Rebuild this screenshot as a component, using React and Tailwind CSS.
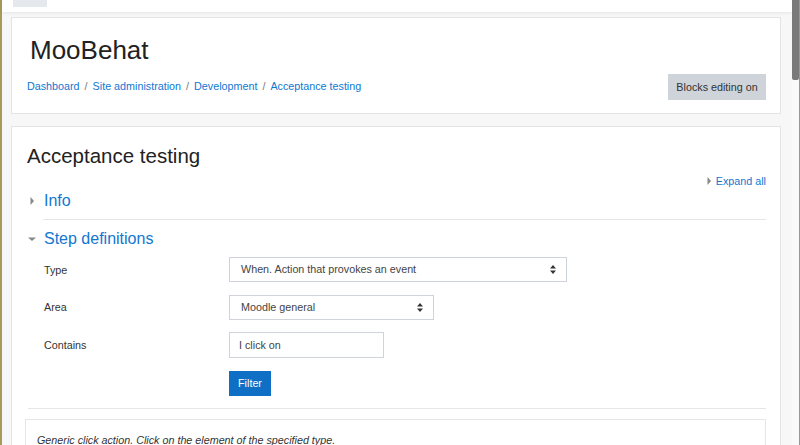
import React from 'react';

const font = { fontFamily: '"Liberation Sans", Arial, sans-serif' };

function Caret({ open }) {
  return open ? (
    <svg width="8" height="8" viewBox="0 0 8 8" className="shrink-0"><path d="M0 2.5h8L4 6z" fill="#888" /></svg>
  ) : (
    <svg width="8" height="8" viewBox="0 0 8 8" className="shrink-0"><path d="M2.5 0v8l3.5-4z" fill="#888" /></svg>
  );
}

function SelectArrows() {
  return (
    <svg width="6" height="9" viewBox="0 0 6 9"><path d="M0 3.5L3 0l3 3.5zM0 5.5L3 9l3-3.5z" fill="#333" /></svg>
  );
}

function Row({ label, children }) {
  return (
    <div className="flex items-center">
      <div className="w-[185px] text-[10.75px] leading-[14px] text-[#333]">{label}</div>
      {children}
    </div>
  );
}

export default function App() {
  return (
    <div style={font} className="w-[800px] h-[445px] overflow-hidden flex bg-white">
      <div className="w-[2px] shrink-0 bg-[#a89a5a]" />
      <div className="flex-1 flex flex-col bg-[#f7f7f7]">
        <div className="h-[12px] shrink-0 bg-white shadow-[0_1px_3px_rgba(0,0,0,0.08)] flex">
          <div className="ml-[11px] w-[34px] h-[7px] bg-[#e5e8ec]" />
        </div>
        <div className="pl-[9px] pr-[11px] pt-[5px] flex flex-col gap-[12px] shrink-0">
          <div className="bg-white border border-[#e3e3e3] h-[97px] pl-[15px] pr-[14px] pt-[17px]">
            <div className="text-[26px] leading-[30px] text-[#222] ml-[3px]">MooBehat</div>
            <div className="flex items-start justify-between mt-[9px]">
              <div className="text-[10.75px] leading-[14px] text-[#1177d1] mt-[5px] flex gap-[5px]">
                <span>Dashboard</span><span className="text-[#777]">/</span>
                <span>Site administration</span><span className="text-[#777]">/</span>
                <span>Development</span><span className="text-[#777]">/</span>
                <span>Acceptance testing</span>
              </div>
              <div className="bg-[#ced4da] text-[10.75px] text-[#333] h-[26px] w-[98px] flex items-center justify-center">Blocks editing on</div>
            </div>
          </div>
          <div className="bg-white border border-[#e3e3e3] h-[340px] pl-[15px] pr-[14px] pt-[16px]">
            <div className="text-[20.5px] leading-[26px] text-[#222]">Acceptance testing</div>
            <div className="flex justify-end items-center gap-[3px] text-[10.75px] leading-[14px] text-[#1177d1] mt-[5px]">
              <Caret />Expand all
            </div>
            <div className="flex items-center gap-[8px] mt-[3px] ml-[1px] h-[20px]">
              <Caret />
              <span className="text-[16px] leading-[20px] text-[#1177d1]">Info</span>
            </div>
            <div className="ml-[16px] border-t border-[#e6e6e6] mt-[8px]" />
            <div className="flex items-center gap-[8px] mt-[9px] ml-[1px] h-[20px]">
              <Caret open />
              <span className="text-[16px] leading-[20px] text-[#1177d1]">Step definitions</span>
            </div>
            <div className="ml-[17px] mt-[8px] flex flex-col gap-[12.5px]">
              <Row label="Type">
                <div className="w-[338px] h-[25px] border border-[#ced4da] flex items-center justify-between pl-[11px] pr-[10px] text-[10.75px] text-[#444]">
                  <span>When. Action that provokes an event</span><SelectArrows />
                </div>
              </Row>
              <Row label="Area">
                <div className="w-[205px] h-[25px] border border-[#ced4da] flex items-center justify-between pl-[11px] pr-[10px] text-[10.75px] text-[#444]">
                  <span>Moodle general</span><SelectArrows />
                </div>
              </Row>
              <Row label="Contains">
                <div className="w-[155px] h-[26px] border border-[#ced4da] flex items-center px-[9px] text-[10.75px] text-[#444]">I click on</div>
              </Row>
              <Row label="">
                <div className="h-[25px] w-[42px] bg-[#0f6fc5] text-white text-[10.75px] flex items-center justify-center">Filter</div>
              </Row>
            </div>
            <div className="ml-[1px] border-t border-[#e6e6e6] mt-[12px]" />
            <div className="mt-[10px] -ml-[2px] border border-[#e6e6e6] h-[40px] px-[11px] pt-[13px] text-[10.75px] leading-[14px] italic text-[#333]">
              Generic click action. Click on the element of the specified type.
            </div>
          </div>
        </div>
      </div>
      <div className="w-[7px] shrink-0 bg-[#fafafa] flex flex-col">
        <div className="h-[80px] bg-[#7a7a7a] rounded-b-[2px]" />
      </div>
      <div className="w-[1px] shrink-0 bg-[#a89a5a]" />
    </div>
  );
}
